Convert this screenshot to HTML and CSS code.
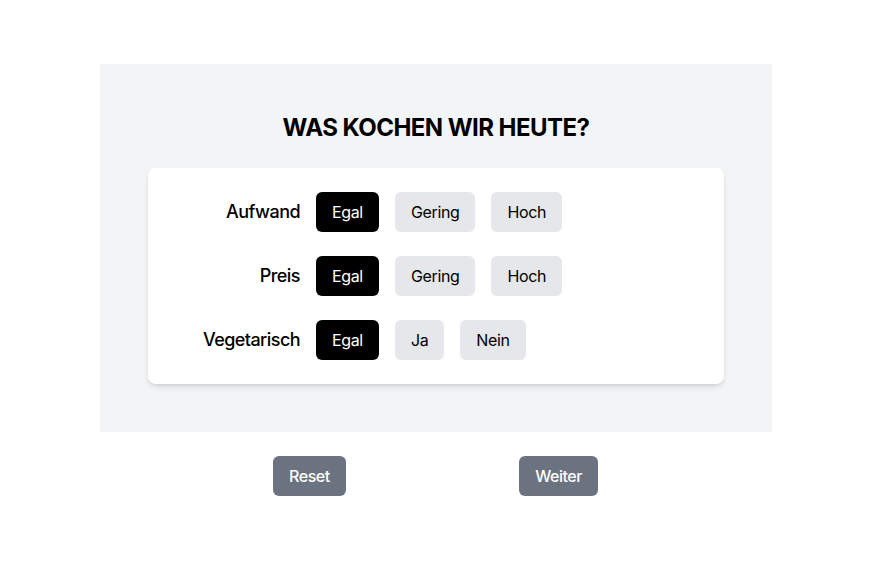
FILE: index.html
```html
<!DOCTYPE html>
<html lang="de">
<head>
<meta charset="utf-8">
<link rel="stylesheet" href="styles.css">
</head>
<body>
<main class="page">
  <section class="panel">
    <h1 class="title">WAS KOCHEN WIR HEUTE?</h1>
    <div class="card">
      <div class="row">
        <span class="label">Aufwand</span>
        <div class="options">
          <button class="opt active">Egal</button>
          <button class="opt">Gering</button>
          <button class="opt">Hoch</button>
        </div>
      </div>
      <div class="row">
        <span class="label">Preis</span>
        <div class="options">
          <button class="opt active">Egal</button>
          <button class="opt">Gering</button>
          <button class="opt">Hoch</button>
        </div>
      </div>
      <div class="row">
        <span class="label">Vegetarisch</span>
        <div class="options">
          <button class="opt active">Egal</button>
          <button class="opt">Ja</button>
          <button class="opt">Nein</button>
        </div>
      </div>
    </div>
  </section>
  <div class="actions">
    <button class="action">Reset</button>
    <button class="action">Weiter</button>
  </div>
</main>
</body>
</html>
```

FILE: styles.css
```css
* { box-sizing: border-box; }
html, body { margin: 0; padding: 0; background: #fff; }
body {
  font-family: Inter, "Noto Sans", sans-serif;
  color: #000;
}
.page {
  width: 672px;
  margin-left: 100px;
  padding-top: 64px;
}
.panel {
  background: #f3f4f6;
  padding: 48px;
}
.title {
  margin: 0 0 24px;
  font-size: 24px;
  line-height: 32px;
  font-weight: 700;
  letter-spacing: -0.55px;
  text-align: center;
}
.card {
  background: #fff;
  border-radius: 8px;
  box-shadow: 0 4px 6px -1px rgba(0,0,0,0.1), 0 2px 4px -2px rgba(0,0,0,0.1);
  padding: 24px;
  display: flex;
  flex-direction: column;
  gap: 24px;
}
.row {
  display: flex;
  align-items: center;
  gap: 16px;
}
.label {
  width: 128px;
  text-align: right;
  font-size: 18px;
  line-height: 28px;
  font-weight: 500;
  letter-spacing: -0.55px;
}
.options {
  display: flex;
  gap: 16px;
}
.opt, .action {
  font-family: inherit;
  font-size: 16px;
  line-height: 24px;
  border: 0;
  border-radius: 6px;
  padding: 8px 16px;
  height: 40px;
  letter-spacing: -0.35px;
}
.opt {
  background: #e5e7eb;
  color: #000;
}
.opt.active {
  background: #000;
  color: #fff;
}
.actions {
  display: flex;
  justify-content: space-between;
  padding: 24px 174px 0 173px;
}
.action {
  background: #6b7280;
  color: #fff;
  font-weight: 500;
  letter-spacing: -0.45px;
}
```
